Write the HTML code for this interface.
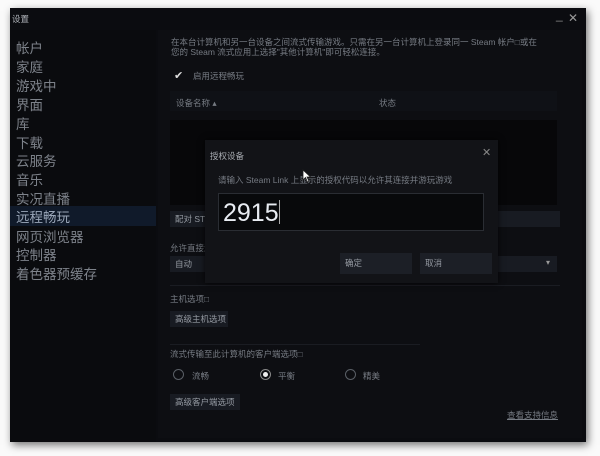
<!DOCTYPE html>
<html><head><meta charset="utf-8">
<style>
*{margin:0;padding:0;box-sizing:border-box}
body{width:600px;height:456px;background:#fafafa;position:relative;overflow:hidden;font-family:"Liberation Sans","Noto Sans CJK SC",sans-serif;color:#8a8f98}
.win{position:absolute;left:10px;top:8px;width:576px;height:434px;background:#0b0c10;box-shadow:2px 3px 8px rgba(0,0,0,.55)}
.a{position:absolute;white-space:nowrap}
.side{position:absolute;left:0;top:22px;width:146px;height:412px;background:#0a0b0e}
.side div{position:absolute;left:6px;font-size:13.5px;color:#7d828a;line-height:18px}
.sel{position:absolute;left:0;top:198px;width:146px;height:20px;background:#101a2a}
.content{position:absolute;left:148px;top:22px;width:424px;height:408px;background:#0d0e12}
.s{font-size:8.5px;color:#767b83}
.btn{position:absolute;background:#181b22;font-size:8.5px;color:#959aa2;padding-left:5px;line-height:16px;white-space:nowrap;overflow:hidden}
.dlg{position:absolute;left:205px;top:140px;width:293px;height:143px;background:#121317;box-shadow:0 0 6px rgba(0,0,0,.8)}
.radio{position:absolute;width:11px;height:11px;border:1px solid #5a5f66;border-radius:50%}
</style></head><body>
<div class="win">
  <div class="a s" style="left:2px;top:5px;color:#b0b4ba">设置</div>
  <div class="a" style="left:546px;top:0px;font-size:12px;color:#888">_</div>
  <div class="a" style="left:558px;top:3px;font-size:12px;color:#999">✕</div>
  <div class="side"></div>
  <div class="sel"></div>
  <div class="content"></div>
  <div class="side" style="background:none">
    <div style="top:10px">帐户</div>
    <div style="top:29px">家庭</div>
    <div style="top:48px">游戏中</div>
    <div style="top:67px">界面</div>
    <div style="top:86px">库</div>
    <div style="top:105px">下载</div>
    <div style="top:123px">云服务</div>
    <div style="top:142px">音乐</div>
    <div style="top:161px">实况直播</div>
    <div style="top:179px;color:#9aa6b8">远程畅玩</div>
    <div style="top:199px">网页浏览器</div>
    <div style="top:217px">控制器</div>
    <div style="top:236px">着色器预缓存</div>
  </div>
  <div class="a s" style="left:161px;top:29px;line-height:10px">在本台计算机和另一台设备之间流式传输游戏。只需在另一台计算机上登录同一 Steam 帐户□或在<br>您的 Steam 流式应用上选择"其他计算机"即可轻松连接。</div>
  <div class="a" style="left:164px;top:61px;font-size:11px;color:#ddd">✔</div>
  <div class="a s" style="left:183px;top:62px">启用远程畅玩</div>
  <div class="a" style="left:160px;top:83px;width:387px;height:20px;background:#0f1116"></div>
  <div class="a s" style="left:166px;top:89px">设备名称 ▴</div>
  <div class="a s" style="left:369px;top:89px">状态</div>
  <div class="a" style="left:160px;top:112px;width:387px;height:85px;background:#070709"></div>
  <div class="btn" style="left:160px;top:203px;width:390px;height:16px">配对 STEAM LINK</div>
  <div class="a s" style="left:160px;top:234px">允许直接连接</div>
  <div class="btn" style="left:160px;top:248px;width:387px;height:16px">自动</div>
  <div class="a" style="left:536px;top:250px;font-size:8px;color:#999">▾</div>
  <div class="a" style="left:160px;top:277px;width:390px;height:1px;background:#1a1c22"></div>
  <div class="a s" style="left:160px;top:285px">主机选项□</div>
  <div class="btn" style="left:160px;top:303px;width:58px;height:16px">高级主机选项</div>
  <div class="a" style="left:160px;top:336px;width:250px;height:1px;background:#1a1c22"></div>
  <div class="a s" style="left:160px;top:340px">流式传输至此计算机的客户端选项□</div>
  <div class="radio" style="left:163px;top:361px"></div>
  <div class="a s" style="left:182px;top:362px">流畅</div>
  <div class="radio" style="left:250px;top:361px;border-color:#888"><div style="position:absolute;left:2px;top:2px;width:5px;height:5px;border-radius:50%;background:#eee"></div></div>
  <div class="a s" style="left:268px;top:362px">平衡</div>
  <div class="radio" style="left:335px;top:361px"></div>
  <div class="a s" style="left:353px;top:362px">精美</div>
  <div class="btn" style="left:160px;top:386px;width:70px;height:16px">高级客户端选项</div>
  <div class="a s" style="left:497px;top:401px;text-decoration:underline">查看支持信息</div>
</div>
<div class="dlg">
  <div class="a s" style="left:5px;top:10px;color:#a8acb2">授权设备</div>
  <div class="a" style="left:277px;top:6px;font-size:11px;color:#888">✕</div>
  <div class="a s" style="left:13px;top:34px">请输入 Steam Link 上显示的授权代码以允许其连接并游玩游戏</div>
  <div class="a" style="left:13px;top:53px;width:266px;height:38px;background:#08090b;border:1px solid #2a2d33"></div>
  <div class="a" style="left:18px;top:58px;font-size:25px;color:#e8ecf2;line-height:30px">2915<span style="display:inline-block;width:1px;height:24px;background:#aaa;vertical-align:-3px"></span></div>
  <div class="btn" style="left:135px;top:113px;width:72px;height:21px;line-height:21px;background:#1c1f26">确定</div>
  <div class="btn" style="left:215px;top:113px;width:72px;height:21px;line-height:21px;background:#1c1f26">取消</div>
</div>
<svg class="a" style="left:302px;top:169px" width="10" height="14" viewBox="0 0 10 14"><path d="M1 1 L1 11 L3.5 8.5 L5.5 13 L7 12.3 L5 8 L8.5 8 Z" fill="#fff" stroke="#222" stroke-width="0.8"/></svg>
</body></html>
